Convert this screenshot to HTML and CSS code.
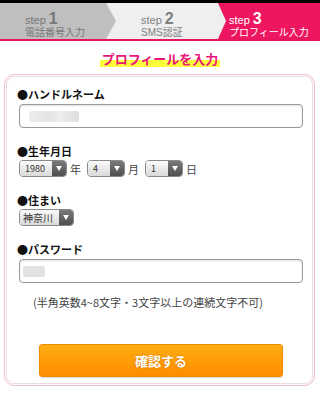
FILE: index.html
```html
<!DOCTYPE html>
<html lang="ja">
<head>
<meta charset="utf-8">
<title>プロフィールを入力</title>
<link rel="stylesheet" href="styles.css">
</head>
<body>
<div class="topbar"></div>

<div class="steps">
  <div class="step step1">
    <div class="stepno">step <b>1</b></div>
    <div class="stepname">電話番号入力</div>
  </div>
  <div class="step step2">
    <div class="stepno">step <b>2</b></div>
    <div class="stepname">SMS認証</div>
  </div>
  <div class="step step3">
    <div class="stepno">step <b>3</b></div>
    <div class="stepname">プロフィール入力</div>
  </div>
</div>

<h1 class="title"><span>プロフィールを入力</span></h1>

<div class="card">
  <div class="label">●ハンドルネーム</div>
  <div class="textbox"><span class="blur blur-name"></span></div>

  <div class="label gap">●生年月日</div>
  <div class="selrow">
    <div class="select w48"><span class="val">1980</span><span class="arrow"></span></div>
    <span class="unit">年</span>
    <div class="select w38"><span class="val">4</span><span class="arrow"></span></div>
    <span class="unit">月</span>
    <div class="select w38"><span class="val">1</span><span class="arrow"></span></div>
    <span class="unit">日</span>
  </div>

  <div class="label gap">●住まい</div>
  <div class="selrow">
    <div class="select w55"><span class="val">神奈川</span><span class="arrow"></span></div>
  </div>

  <div class="label gap">●パスワード</div>
  <div class="textbox"><span class="blur blur-pass"></span></div>
  <p class="note">(半角英数4~8文字・3文字以上の連続文字不可)</p>

  <div class="btnwrap">
    <button class="submit" type="button">確認する</button>
  </div>
</div>
</body>
</html>
```

FILE: styles.css
```css
body {
  margin: 0;
  background: #fff;
  font-family: "Liberation Sans", "Noto Sans CJK JP", sans-serif;
  color: #111;
}

.topbar {
  height: 3px;
  background: #000;
}

/* step indicator */
.steps {
  display: flex;
  height: 36px;
  border-bottom: 2px solid #e8175d;
}

.step {
  box-sizing: border-box;
  padding-top: 9px;
  position: relative;
}

.step1 {
  width: 116px;
  padding-left: 25px;
  background: #bfbfbf;
  color: #777;
  z-index: 3;
  clip-path: polygon(0 0, calc(100% - 10px) 0, 100% 50%, calc(100% - 10px) 100%, 0 100%);
}

.step2 {
  width: 121px;
  margin-left: -11px;
  padding-left: 36px;
  background: #efefef;
  color: #808080;
  z-index: 2;
  clip-path: polygon(0 0, calc(100% - 8px) 0, 100% 50%, calc(100% - 8px) 100%, 0 100%);
}

.step3 {
  flex: 1;
  margin-left: -11px;
  padding-left: 14px;
  background: #ee1660;
  color: #fff;
}

.stepno {
  font-size: 11px;
  line-height: 13px;
}

.stepno b {
  font-size: 16px;
}

.stepname {
  font-size: 10px;
  line-height: 11px;
}

/* heading */
.title {
  margin: 11px 0 0;
  text-align: center;
  font-size: 13px;
  line-height: 16px;
  color: #e8157a;
}

.title span {
  padding: 0 2px;
  background: linear-gradient(transparent 50%, #ffff3a 50%);
}

/* form card */
.card {
  box-sizing: border-box;
  width: 311px;
  height: 312px;
  margin: 6px 0 0 4px;
  padding: 12px 11px 0 12px;
  border: 1px solid #f2bdd1;
  border-radius: 10px;
  box-shadow: inset 0 0 0 1px #fff, inset 0 0 0 2px #eadde2;
}

.label {
  font-size: 11px;
  line-height: 14px;
  font-weight: bold;
  font-family: "Noto Sans CJK JP", sans-serif;
}

.label.gap {
  margin-top: 16px;
}

.textbox {
  box-sizing: border-box;
  height: 24px;
  margin: 3px 0 0 2px;
  padding: 6px 9px;
  border: 1px solid #999;
  border-radius: 4px;
  box-shadow: inset 0 1px 2px rgba(0, 0, 0, 0.12);
  background: #fff;
}

.blur {
  display: block;
  height: 11px;
  border-radius: 2px;
}

.blur-name {
  width: 50px;
  background: linear-gradient(90deg, #ececec, #e4e4e4 40%, #ededed 60%, #dedede);
}

.blur-pass {
  width: 22px;
  margin-left: -6px;
  background: #e2e2e2;
}

.selrow {
  display: flex;
  align-items: center;
  margin: 2px 0 0 2px;
  height: 17px;
}

.select {
  box-sizing: border-box;
  display: flex;
  height: 17px;
  border: 1px solid #8a8a8a;
  border-radius: 4px;
  overflow: hidden;
}

.w48 { width: 48px; }
.w38 { width: 38px; }
.w55 { width: 55px; }

.select .val {
  flex: 1;
  padding-left: 5px;
  font-size: 9px;
  line-height: 15px;
  color: #333;
  background: linear-gradient(#fafafa, #d9d9d9);
  font-family: "Noto Sans CJK JP", sans-serif;
}

.w55 .val {
  font-size: 10px;
  padding-left: 3px;
}

.select .arrow {
  width: 14px;
  position: relative;
  background: linear-gradient(#7a7a7a, #4e4e4e);
}

.select .arrow::after {
  content: "";
  position: absolute;
  left: 4px;
  top: 5px;
  border-left: 3px solid transparent;
  border-right: 3px solid transparent;
  border-top: 5px solid #fff;
}

.unit {
  margin: 0 6px 0 3px;
  font-size: 11px;
  color: #444;
  font-family: "Noto Sans CJK JP", sans-serif;
}

.unit:last-child {
  margin-right: 0;
}

.note {
  margin: 12px 0 0 16px;
  font-size: 11px;
  line-height: 14px;
  color: #444;
  font-family: "Noto Sans CJK JP", sans-serif;
}

.btnwrap {
  margin-top: 35px;
  padding-left: 22px;
}

.submit {
  display: block;
  width: 244px;
  height: 33px;
  border: 1px solid #f08a00;
  border-radius: 3px;
  background: linear-gradient(#ffae12, #ff8c00);
  color: #fff;
  font-size: 13px;
  font-weight: bold;
  font-family: "Noto Sans CJK JP", sans-serif;
  text-shadow: 0 0 2px rgba(160, 80, 0, 0.5);
  box-shadow: 0 1px 1px rgba(0, 0, 0, 0.15);
}
```
